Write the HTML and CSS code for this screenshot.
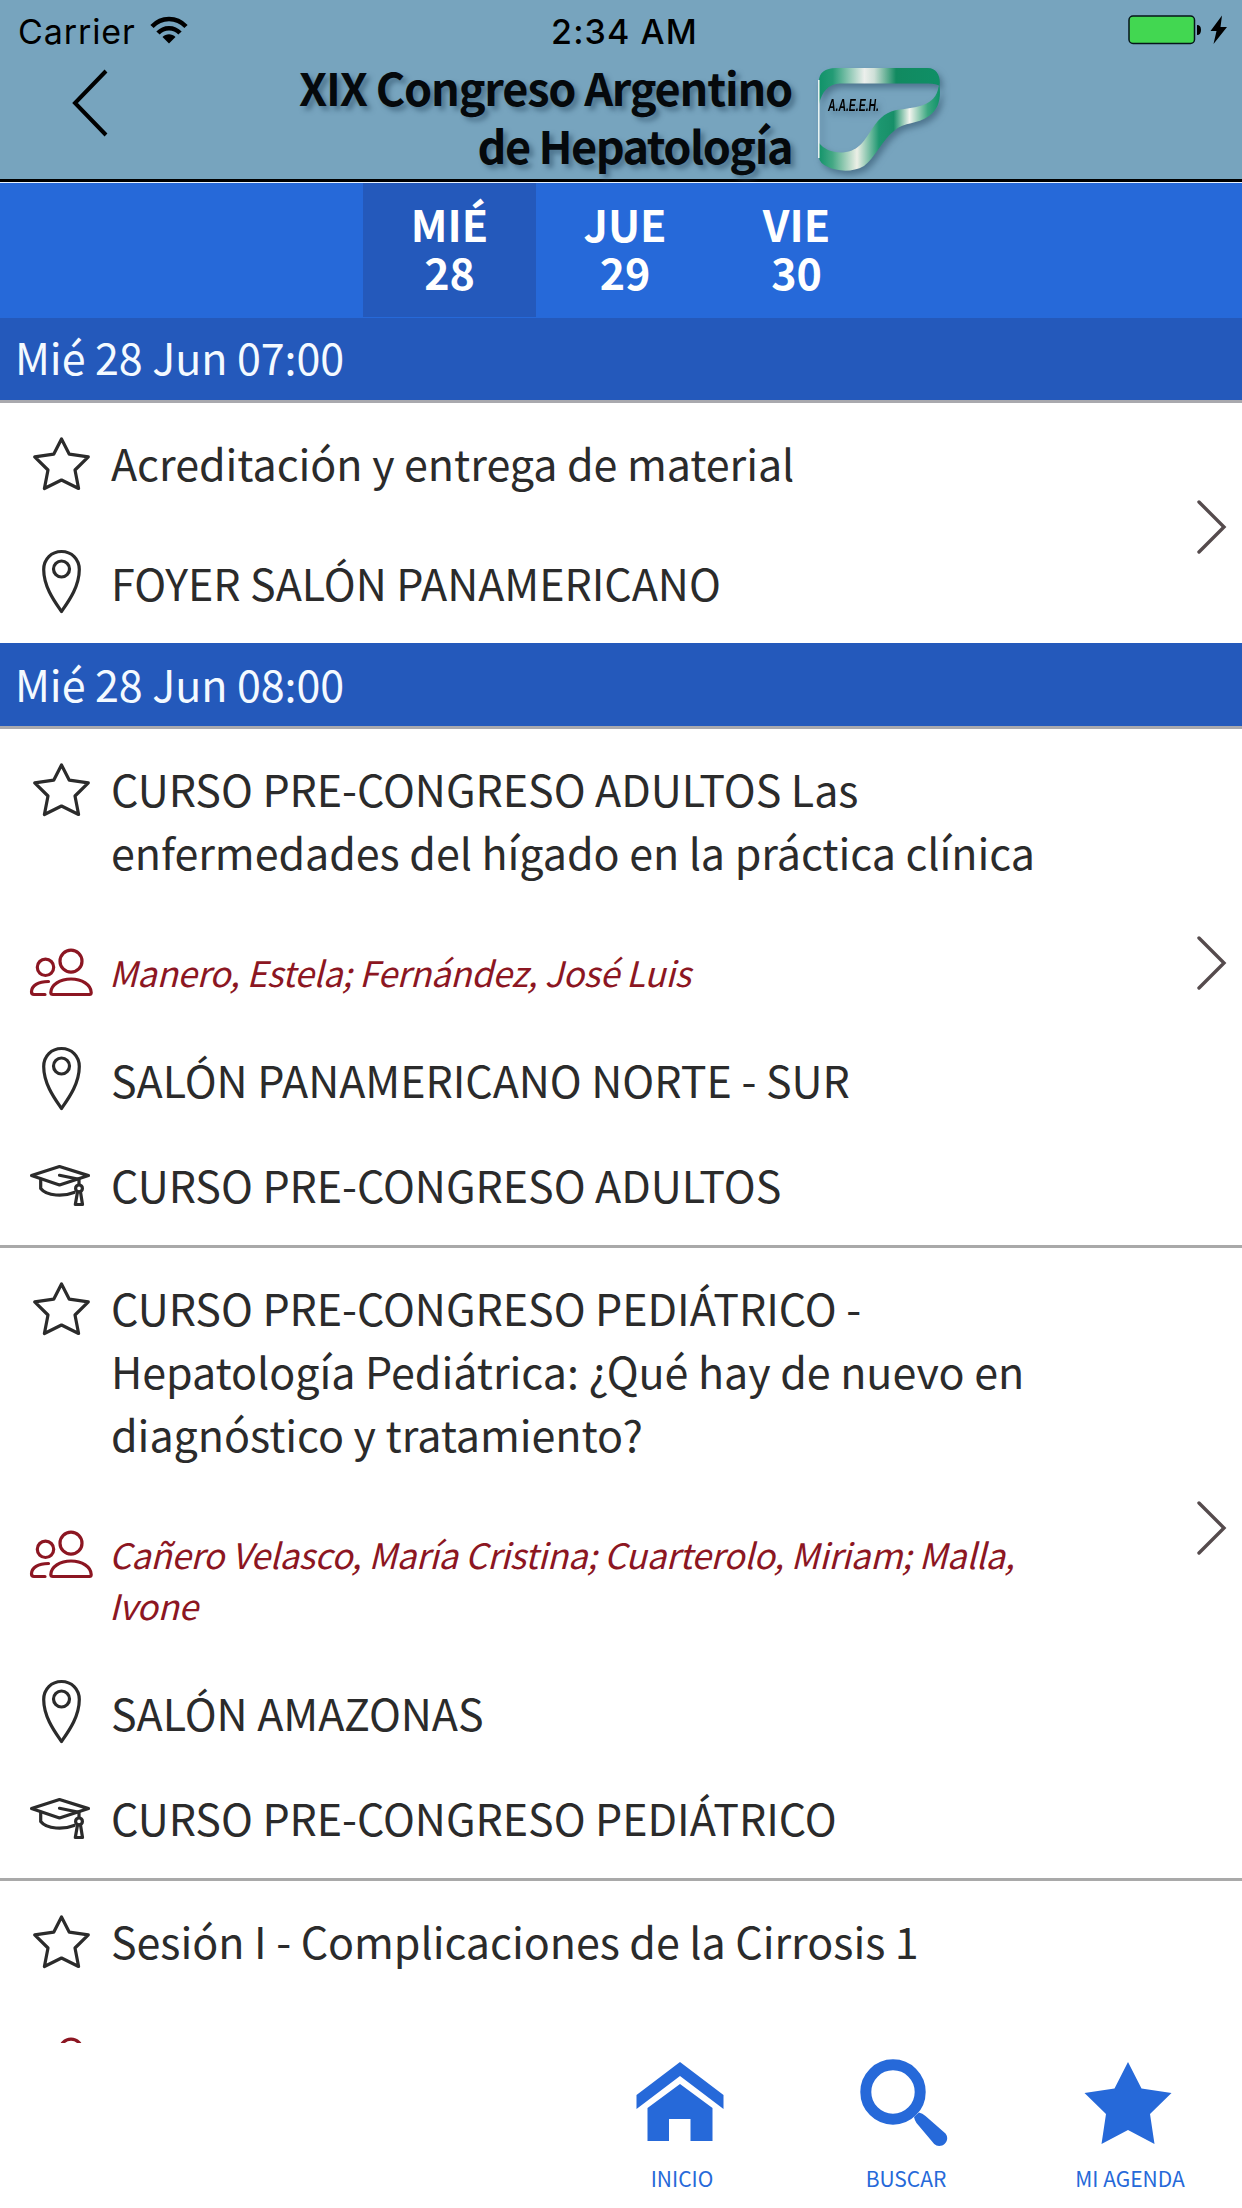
FILE: index.html
```html
<!DOCTYPE html>
<html lang="es">
<head>
    <meta charset="UTF-8">
    <meta name="viewport" content="width=device-width, initial-scale=1.0">
    <title>XIX Congreso Argentino de Hepatología</title>
    <link rel="stylesheet" href="styles.css">
</head>
<body>
    <svg class="sprite" width="0" height="0">
        <defs>
            <g id="icon-star">
                <path d="M61.5 8 L69.3 23.2 L88.3 25.8 L75 39 L78.6 57.5 L61.5 49 L44.4 57.5 L48 39 L34.7 25.8 L53.7 23.2 Z"/>
            </g>
            <g id="icon-pin">
                <path d="M61.5 60.5 C55 51 43.7 36 43.7 18.5 C43.7 8 51.5 .5 61.5 .5 S79.3 8 79.3 18.5 C79.3 36 68 51 61.5 60.5 Z"/>
                <circle cx="61.5" cy="18" r="8"/>
            </g>
            <g id="icon-people">
                <circle cx="71" cy="15.2" r="11"/>
                <circle cx="45.5" cy="21.3" r="8.2"/>
                <path d="M53 48.5 H89.5 Q91.2 48.5 91.2 46.5 C91 39 82 33 71 33 S51 39 50.8 46.5 Q50.8 48.5 53 48.5 Z"/>
                <path d="M48.5 35.5 C38 35.5 31.6 39.5 31.5 45.8 Q31.5 48.5 34 48.5 H45"/>
            </g>
            <g id="icon-cap">
                <path d="M59.5 13.5 L88.5 22.6 L59.5 32 L31.5 22.6 Z"/>
                <path d="M59.5 22.3 L79 26.2 V31.5"/>
                <path d="M40.7 26 V35.5 C47 43.5 64 43.5 74 39.5"/>
                <circle cx="79" cy="35.4" r="3.4"/>
                <path d="M77.5 39 L75.3 51.5 H82.5 L80.5 39"/>
            </g>
        </defs>
    </svg>

    <header class="header">
        <div class="status-bar">
            <div class="carrier">
                <span>Carrier</span>
                <svg class="wifi" width="38" height="28" viewBox="0 0 38 28">
                    <path d="M2 10.5 C11.5 .5 26.5 .5 36 10.5" fill="none" stroke="#000" stroke-width="4.5"/>
                    <path d="M8 17 C14 10.500 24 10.500 30 17" fill="none" stroke="#000" stroke-width="4.5"/>
                    <path d="M12.500 21 C16 17.300 22 17.300 25.500 21 L19 27.500 Z"/>
                </svg>
            </div>
            <span class="time">2:34 AM</span>
            <svg class="battery" width="101" height="32" viewBox="0 0 101 32">
                <rect x="1" y="2" width="65.500" height="27.500" rx="4" fill="#42d751" stroke="#06151a" stroke-width="1.500"/>
                <path d="M69 11 Q73 11 73 16 Q73 21 69 21 Z"/>
                <path d="M94 1.500 L82.500 17 H88.500 L85.500 30 L99 13 H92.500 Z"/>
            </svg>
        </div>
        <div class="title-bar">
            <svg class="back" width="40" height="70" viewBox="0 0 40 70">
                <path d="M36 3 L5 35 L36 67" fill="none" stroke="#000" stroke-width="4"/>
            </svg>
            <h1 class="title"><span class="title-top">XIX Congreso Argentino</span><span class="title-bottom">de Hepatología</span></h1>
            <svg class="logo" width="132" height="112" viewBox="816 65 132 112">
                <defs>
                    <linearGradient id="band-top" gradientUnits="userSpaceOnUse" x1="818" y1="0" x2="940" y2="0">
                        <stop offset="0" stop-color="#0f9268"/>
                        <stop offset=".12" stop-color="#239b75"/>
                        <stop offset=".38" stop-color="#ecefec"/>
                        <stop offset=".46" stop-color="#cfe0d8"/>
                        <stop offset=".64" stop-color="#118a60"/>
                        <stop offset="1" stop-color="#0f8f66"/>
                    </linearGradient>
                    <linearGradient id="band-bottom" gradientUnits="userSpaceOnUse" x1="818" y1="0" x2="940" y2="0">
                        <stop offset="0" stop-color="#0f9268"/>
                        <stop offset=".12" stop-color="#45a985"/>
                        <stop offset=".32" stop-color="#ecefe6"/>
                        <stop offset=".5" stop-color="#1d9770"/>
                        <stop offset=".62" stop-color="#178f68"/>
                        <stop offset=".75" stop-color="#f2f4ee"/>
                        <stop offset=".9" stop-color="#3ba780"/>
                        <stop offset="1" stop-color="#0f9268"/>
                    </linearGradient>
                </defs>
                <path fill="url(#band-bottom)" d="M939.500 85 C941 98 939 109 929 116 C917 125 905 121 894 131 C882 140 875 158 864 166 C852 173 836 171 828 167 Q819 163 819 157 V143 C824 149 832 153 843 152.500 C860 151 865 139 872 129 C880 117 887 111 900 109.500 C915 107.500 936 106 938.500 87 Z"/>
                <path fill="url(#band-top)" d="M819 104 V81 C819 73 825 68 836 68 H928 C937 68 941 77 939.500 86 Q937 83.500 928 83.500 H840 C828 84 822 92 819 104 Z"/>
                <path d="M818.800 80 V158" stroke="#edf6f5" stroke-width="1.500"/>
                <text class="logo-text" x="828" y="110.500" textLength="51" lengthAdjust="spacingAndGlyphs">A.A.E.E.H.</text>
            </svg>
        </div>
    </header>

    <nav class="days">
        <a class="day active">MIÉ<br>28</a>
        <a class="day">JUE<br>29</a>
        <a class="day">VIE<br>30</a>
    </nav>

    <main class="schedule">
        <h2 class="slot">Mié 28 Jun 07:00</h2>
        <article class="session">
            <div class="row">
                <svg class="icon"><use href="#icon-star"/></svg>
                <p>Acreditación y entrega de material</p>
            </div>
            <div class="row place first">
                <svg class="icon"><use href="#icon-pin"/></svg>
                <p>FOYER SALÓN PANAMERICANO</p>
            </div>
            <svg class="arrow arrow-small" viewBox="0 0 30 54"><path d="M2 2 L27 27 L2 52"/></svg>
        </article>

        <h2 class="slot second">Mié 28 Jun 08:00</h2>
        <article class="session">
            <div class="row">
                <svg class="icon"><use href="#icon-star"/></svg>
                <p>CURSO PRE-CONGRESO ADULTOS Las<br>enfermedades del hígado en la práctica clínica</p>
            </div>
            <div class="row people">
                <svg class="icon"><use href="#icon-people"/></svg>
                <p>Manero, Estela; Fernández, José Luis</p>
            </div>
            <div class="row place">
                <svg class="icon"><use href="#icon-pin"/></svg>
                <p>SALÓN PANAMERICANO NORTE - SUR</p>
            </div>
            <div class="row course">
                <svg class="icon"><use href="#icon-cap"/></svg>
                <p>CURSO PRE-CONGRESO ADULTOS</p>
            </div>
            <svg class="arrow arrow-medium" viewBox="0 0 30 54"><path d="M2 2 L27 27 L2 52"/></svg>
        </article>

        <article class="session">
            <div class="row">
                <svg class="icon"><use href="#icon-star"/></svg>
                <p>CURSO PRE-CONGRESO PEDIÁTRICO -<br>Hepatología Pediátrica: ¿Qué hay de nuevo en<br>diagnóstico y tratamiento?</p>
            </div>
            <div class="row people">
                <svg class="icon"><use href="#icon-people"/></svg>
                <p>Cañero Velasco, María Cristina; Cuarterolo, Miriam; Malla,<br>Ivone</p>
            </div>
            <div class="row place">
                <svg class="icon"><use href="#icon-pin"/></svg>
                <p>SALÓN AMAZONAS</p>
            </div>
            <div class="row course">
                <svg class="icon"><use href="#icon-cap"/></svg>
                <p>CURSO PRE-CONGRESO PEDIÁTRICO</p>
            </div>
            <svg class="arrow arrow-large" viewBox="0 0 30 54"><path d="M2 2 L27 27 L2 52"/></svg>
        </article>

        <article class="session">
            <div class="row">
                <svg class="icon"><use href="#icon-star"/></svg>
                <p>Sesión I - Complicaciones de la Cirrosis 1</p>
            </div>
            <div class="row people">
                <svg class="icon"><use href="#icon-people"/></svg>
            </div>
        </article>
    </main>

    <footer class="tabs">
        <a class="tab">
            <svg width="90" height="90" viewBox="635.500 2058 90 90">
                <path d="M680.500 2062 L724 2095 V2109 L680.500 2076 L637 2109 V2095 Z"/>
                <path d="M680.500 2084 L713 2108 V2141 H691 V2119 H669.500 V2141 H648 V2108 Z"/>
            </svg>
            <span>INICIO</span>
        </a>
        <a class="tab">
            <svg width="90" height="90" viewBox="859.500 2058 90 90">
                <circle cx="893.500" cy="2092" r="27.200" fill="none" stroke="#2669d9" stroke-width="11"/>
                <path d="M914.500 2117 L919.400 2112.500 Q923 2113 926 2116 L946 2133.500 C951 2140 944 2148 937 2145.500 Q935 2145 933 2142 L917 2123 Q915 2120 914.500 2117 Z"/>
            </svg>
            <span>BUSCAR</span>
        </a>
        <a class="tab">
            <svg width="90" height="90" viewBox="1083.500 2058 90 90">
                <path d="M1128.500 2062 L1142 2088.600 L1172 2093 L1150.500 2114 L1155 2144 L1128.500 2130 L1102 2144 L1106.500 2114 L1085 2093 L1115 2088.600 Z"/>
            </svg>
            <span>MI AGENDA</span>
        </a>
    </footer>
</body>
</html>
```
FILE: styles.css
```css
* {
    box-sizing: border-box;
}
body {
    margin: 0;
    width: 1242px;
    height: 2208px;
    overflow: hidden;
    display: flex;
    flex-direction: column;
    background: #fff;
    color: #2b2b2b;
    font-family: "Noto Sans CJK SC", "Noto Sans", sans-serif;
    font-size: 43px;
    line-height: 63px;
}
h1, h2, p {
    margin: 0;
    font-weight: 400;
    white-space: nowrap;
}
.sprite {
    position: absolute;
}

/* header */
.header {
    flex: none;
    height: 182px;
    background: #77a4be;
    border-bottom: 3px solid #000;
    color: #000;
}
.status-bar {
    display: grid;
    grid-template-columns: 1fr auto 1fr;
    height: 60px;
    padding: 14px 13px 0 18px;
    font-family: Inter, "Liberation Sans", sans-serif;
    font-size: 34px;
    line-height: 36px;
}
.carrier {
    display: flex;
    gap: 14px;
    letter-spacing: 0.9px;
}
.wifi {
    margin-top: 2px;
}
.time {
    font-weight: 500;
    letter-spacing: 1.1px;
    padding-left: 2px;
}
.battery {
    justify-self: end;
}
.title-bar {
    display: flex;
    align-items: flex-start;
}
.back {
    margin: 8px 0 0 70px;
}
.title {
    display: flex;
    flex-direction: column;
    align-items: flex-end;
    width: 682px;
    margin-top: -2px;
    color: #05090c;
    font-size: 45px;
    font-weight: 700;
    line-height: 58px;
    text-shadow: 4px 4px 5px rgba(50, 85, 110, 0.6);
}
.title-top {
    letter-spacing: -1.2px;
}
.title-bottom {
    letter-spacing: -1.5px;
}
.logo {
    margin: 5px 0 0 24px;
    filter: drop-shadow(3px 4px 3px rgba(50, 85, 110, 0.6));
}
.logo-text {
    font: italic 700 17px "Liberation Sans", sans-serif;
}

/* day picker */
.days {
    display: flex;
    flex: none;
    height: 136px;
    padding: 0 0 1px 363px;
    border-top: 1px solid #e8f2ff;
    background: #2669d9;
}
.day {
    width: 165px;
    padding-top: 16px;
    color: #fff;
    font-weight: 700;
    line-height: 48px;
    text-align: center;
}
.day:nth-child(2) {
    width: 178px;
}
.active {
    width: 173px;
    background: #2459bb;
}

/* schedule */
.schedule {
    flex: none;
    height: 1725px;
    overflow: hidden;
}
.slot {
    height: 85px;
    padding: 7px 15px 0;
    border-bottom: 3px solid #a9a9ae;
    background: #2459bb;
    color: #f4faff;
    font-size: 43px;
    letter-spacing: -0.05px;
}
.second {
    height: 86px;
    padding-top: 9px;
}
.session {
    position: relative;
    padding: 28px 0 29px;
}
.session + .session {
    border-top: 3px solid #a9a9a9;
}
.row {
    display: grid;
    grid-template-columns: 111px 1fr;
    letter-spacing: -0.04px;
}
.icon {
    width: 111px;
    height: 50px;
    overflow: visible;
    fill: none;
    stroke: #2b2b2b;
    stroke-width: 3.2;
    stroke-linejoin: round;
    stroke-linecap: round;
}
.people {
    margin-top: 63px;
    color: #8c1622;
    font-size: 35px;
    font-style: italic;
    letter-spacing: -0.37px;
    line-height: 51px;
}
.people p {
    margin-left: -2px;
}
.people .icon {
    stroke: #8c1622;
}
.place {
    margin-top: 51px;
}
.place.first {
    margin-top: 57px;
}
.course {
    margin-top: 42px;
}
.arrow {
    position: absolute;
    right: 15px;
    width: 30px;
    height: 54px;
    fill: none;
    stroke: #554b4d;
    stroke-width: 3.4;
    stroke-linecap: round;
}
.arrow-small {
    top: 97px;
}
.arrow-medium {
    top: 207px;
}
.arrow-large {
    top: 253px;
}

/* bottom bar */
.tabs {
    display: flex;
    flex: none;
    height: 165px;
    padding: 15px 0 0 568px;
    background: #fff;
}
.tab {
    display: flex;
    flex: none;
    flex-direction: column;
    align-items: center;
    width: 224px;
    color: #2669d9;
    fill: #2669d9;
    font-size: 21px;
    line-height: 30px;
}
.tab span {
    margin: 15px 0 0 4px;
}
```
